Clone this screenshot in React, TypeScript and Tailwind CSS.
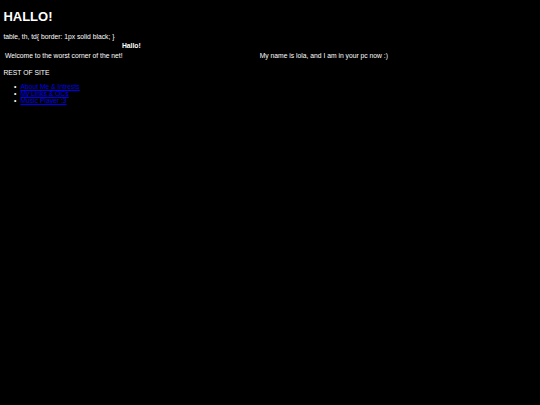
export default function App() {
  const links = ['About Me & Intrests', 'My Links & OCs', 'Music Player :3'];

  return (
    <div className="min-h-[405px] bg-black px-[3.4px] pt-[3px] text-white font-['Liberation_Sans',Arial,sans-serif] text-[6.75px] leading-[7.6px]">
      <h1 className="mt-[6px] mb-[9px] text-[13px] font-bold leading-[15px]">HALLO!</h1>
      <div>table, th, td{'{'} border: 1px solid black; {'}'}</div>
      <table className="w-full border-separate border-spacing-[1.2px]">
        <thead>
          <tr>
            <th className="p-[0.5px] text-center font-bold">Hallo!</th>
            <th className="p-[0.5px]"></th>
          </tr>
        </thead>
        <tbody>
          <tr>
            <td className="p-[0.5px]">Welcome to the worst corner of the net!</td>
            <td className="p-[0.5px]">My name is lola, and I am in your pc now :)</td>
          </tr>
        </tbody>
      </table>
      <p className="mt-[8.5px] mb-[5.7px]">REST OF SITE</p>
      <ul className="pl-[10.5px] leading-[7.4px]">
        {links.map((l) => (
          <li key={l} className="flex">
            <span className="inline-block w-[6.5px]">•</span>
            <a href="#" className="text-[#0000ee] underline">
              {l}
            </a>
          </li>
        ))}
      </ul>
    </div>
  );
}
